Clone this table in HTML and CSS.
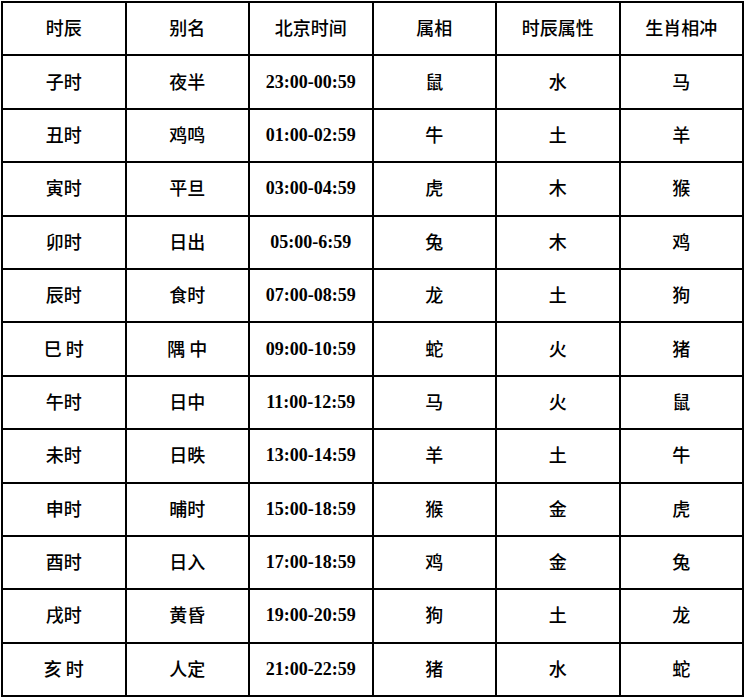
FILE: index.html
```html
<!DOCTYPE html>
<html lang="zh">
<head>
<meta charset="utf-8">
<title>十二时辰</title>
<link rel="stylesheet" href="styles.css">
</head>
<body>
<table class="shichen">
<colgroup><col><col><col><col><col><col></colgroup>
<tr><td>时辰</td><td>别名</td><td>北京时间</td><td>属相</td><td>时辰属性</td><td>生肖相冲</td></tr>
<tr><td>子时</td><td>夜半</td><td class="num">23:00-00:59</td><td>鼠</td><td>水</td><td>马</td></tr>
<tr><td>丑时</td><td>鸡鸣</td><td class="num">01:00-02:59</td><td>牛</td><td>土</td><td>羊</td></tr>
<tr><td>寅时</td><td>平旦</td><td class="num">03:00-04:59</td><td>虎</td><td>木</td><td>猴</td></tr>
<tr><td>卯时</td><td>日出</td><td class="num">05:00-6:59</td><td>兔</td><td>木</td><td>鸡</td></tr>
<tr><td>辰时</td><td>食时</td><td class="num">07:00-08:59</td><td>龙</td><td>土</td><td>狗</td></tr>
<tr><td>巳 时</td><td>隅 中</td><td class="num">09:00-10:59</td><td>蛇</td><td>火</td><td>猪</td></tr>
<tr><td>午时</td><td>日中</td><td class="num">11:00-12:59</td><td>马</td><td>火</td><td>鼠</td></tr>
<tr><td>未时</td><td>日昳</td><td class="num">13:00-14:59</td><td>羊</td><td>土</td><td>牛</td></tr>
<tr><td>申时</td><td>晡时</td><td class="num">15:00-18:59</td><td>猴</td><td>金</td><td>虎</td></tr>
<tr><td>酉时</td><td>日入</td><td class="num">17:00-18:59</td><td>鸡</td><td>金</td><td>兔</td></tr>
<tr><td>戌时</td><td>黄昏</td><td class="num">19:00-20:59</td><td>狗</td><td>土</td><td>龙</td></tr>
<tr><td>亥 时</td><td>人定</td><td class="num">21:00-22:59</td><td>猪</td><td>水</td><td>蛇</td></tr>
</table>
</body>
</html>
```

FILE: styles.css
```css
html, body {
  margin: 0;
  padding: 0;
  background: #fff;
}
.shichen {
  margin: 1px 0 0 1px;
  width: 743px;
  border-collapse: collapse;
  table-layout: fixed;
  font-family: "Noto Sans CJK SC", "Liberation Serif", serif;
  font-size: 18px;
  font-weight: 500;
  color: #000;
}
.shichen td {
  border: 2px solid #000;
  height: 48.4px;
  padding: 0 0 3px 0;
  text-align: center;
  vertical-align: middle;
  line-height: 1;
}
.shichen td.num {
  font-family: "Liberation Serif", "Times New Roman", serif;
  font-weight: bold;
  font-size: 18px;
  padding: 0 0 1px 0;
}
```
